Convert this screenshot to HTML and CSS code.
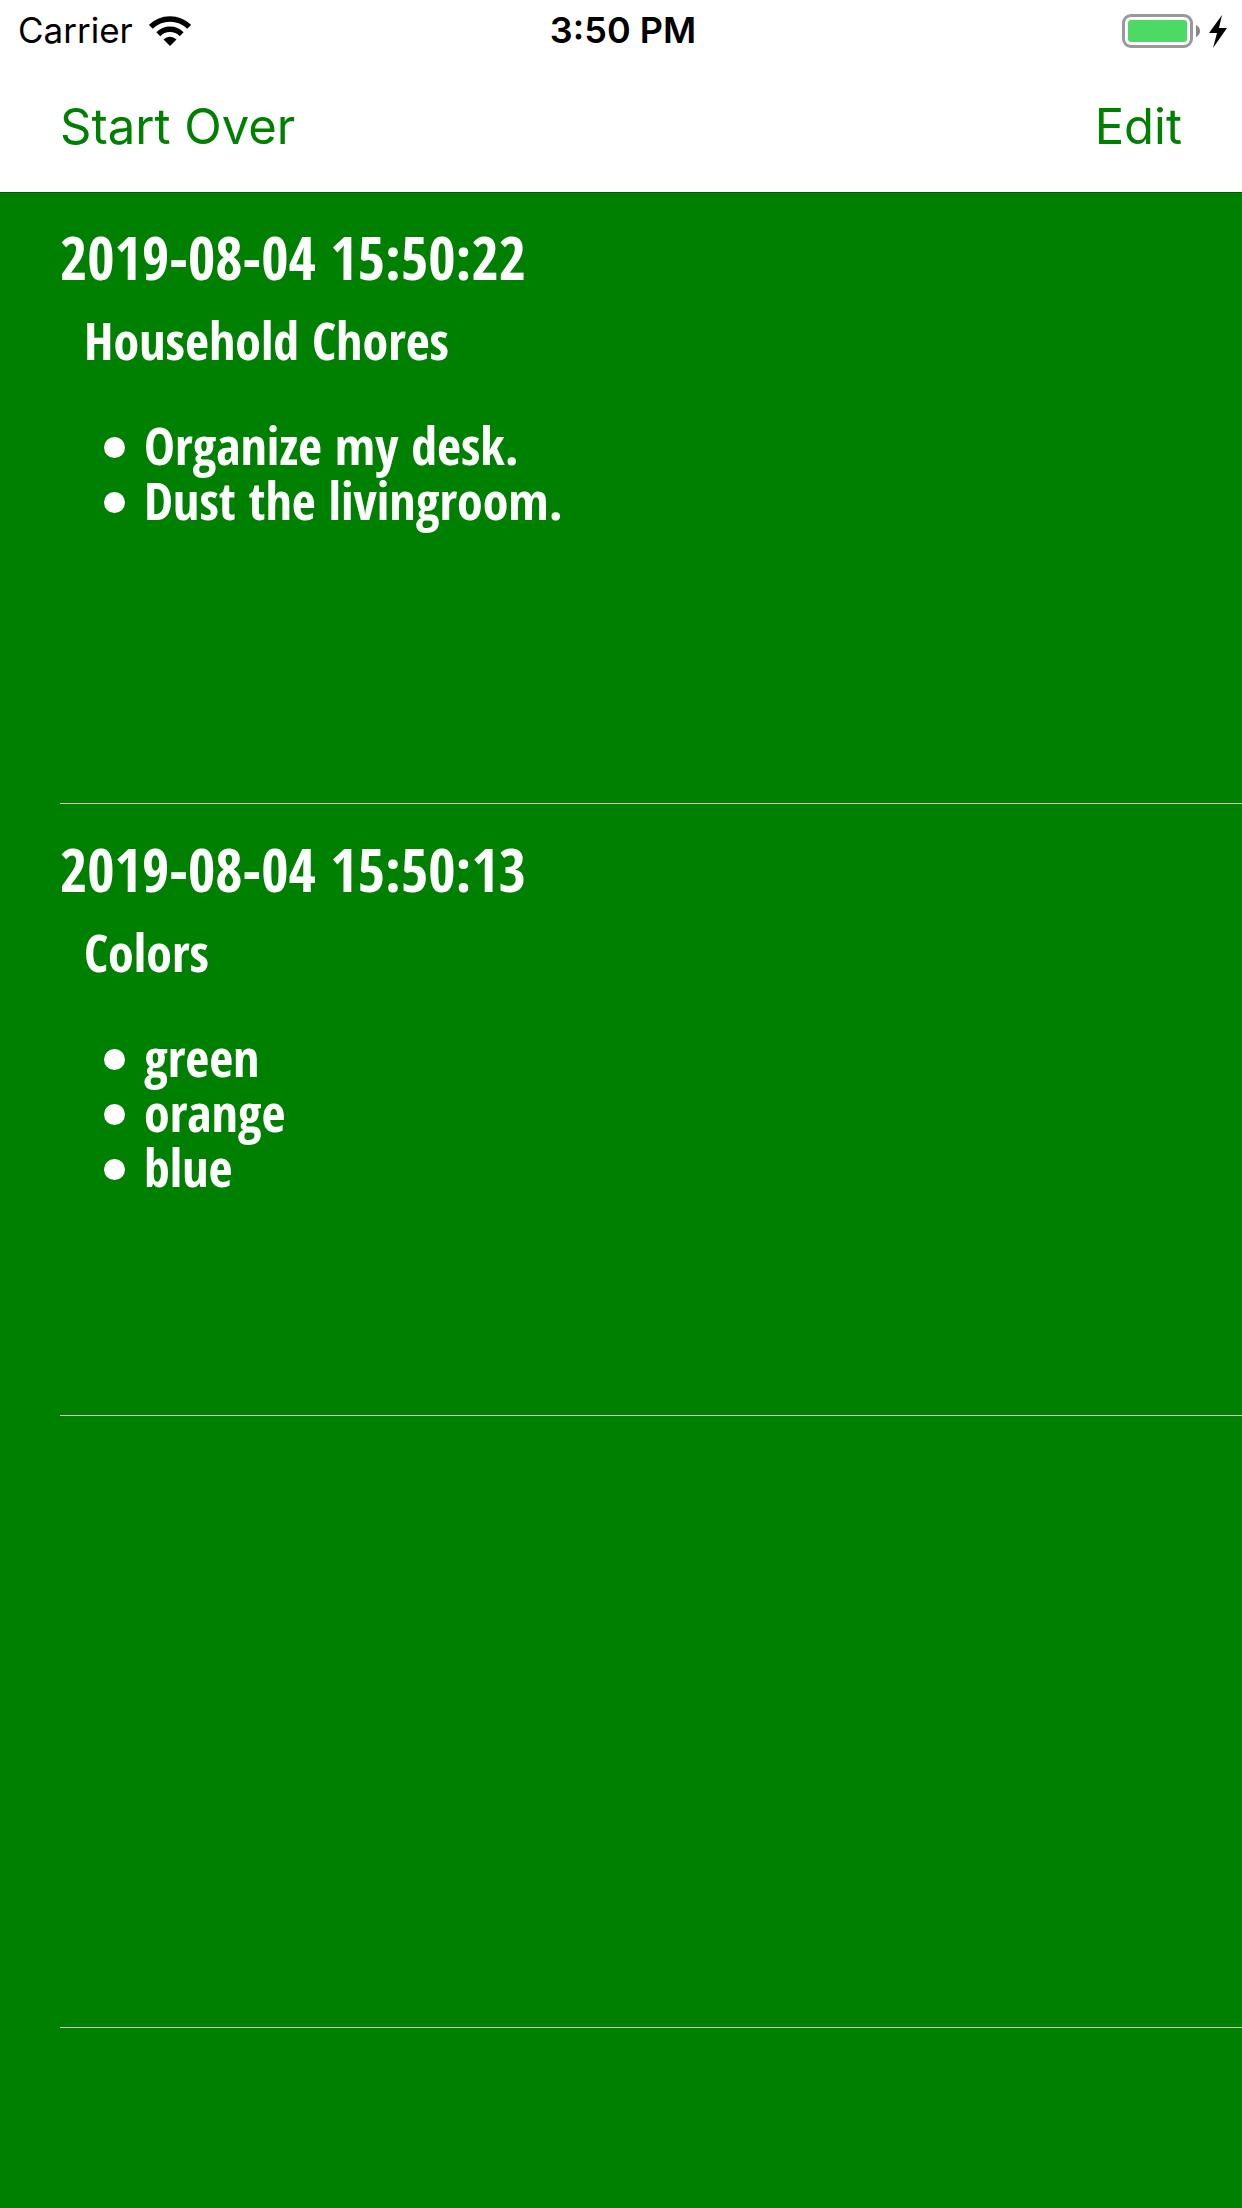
FILE: index.html
```html
<!DOCTYPE html>
<html lang="en">
<head>
  <meta charset="utf-8">
  <meta name="viewport" content="width=device-width, initial-scale=1">
  <title>Lists</title>
  <link rel="stylesheet" href="styles.css">
</head>
<body>
  <div class="status-bar">
    <div class="status-left">
      <span>Carrier</span>
      <svg class="wifi" viewBox="0 0 42 30" aria-hidden="true">
        <path d="M21 30 14.5 23.5A9.2 9.2 0 0 1 27.500 23.500Z"/>
        <path class="arc" d="M9.300 18.200A16.500 16.500 0 0 1 32.700 18.200M1.800 10.900A27.200 27.200 0 0 1 40.200 10.900"/>
      </svg>
    </div>
    <time class="status-time">3:50 PM</time>
    <div class="status-right">
      <svg class="battery" viewBox="0 0 106 34" aria-hidden="true">
        <rect class="shell" x="1.500" y="1.500" width="68" height="31" rx="7.500"/>
        <rect class="charge" x="6" y="6" width="59" height="22" rx="3"/>
        <path class="cap" d="M74 11Q78 13 78 17T74 23Z"/>
        <path d="M100 1 87 19H95L91 34 105 14H97Z"/>
      </svg>
    </div>
  </div>
  <header class="nav-bar">
    <button type="button" class="nav-button">Start Over</button>
    <button type="button" class="nav-button">Edit</button>
  </header>
  <main class="entries">
    <article class="entry">
      <h2 class="entry-date">2019-08-04 15:50:22</h2>
      <h3 class="entry-title">Household Chores</h3>
      <ul class="entry-items">
        <li>Organize my desk.</li>
        <li>Dust the livingroom.</li>
      </ul>
    </article>
    <article class="entry">
      <h2 class="entry-date">2019-08-04 15:50:13</h2>
      <h3 class="entry-title">Colors</h3>
      <ul class="entry-items">
        <li>green</li>
        <li>orange</li>
        <li>blue</li>
      </ul>
    </article>
    <div class="entry"></div>
  </main>
</body>
</html>
```
FILE: styles.css
```css
* {
  box-sizing: border-box;
}

body {
  margin: 0;
  min-height: 100vh;
  display: flex;
  flex-direction: column;
  background: #fff;
  color: #000;
  font-family: Inter, "Liberation Sans", sans-serif;
}

.status-bar {
  display: grid;
  grid-template-columns: 1fr auto 1fr;
  align-items: center;
  height: 61px;
  padding: 0 14px 0 18px;
  font-size: 35px;
  line-height: 61px;
}

.status-left {
  display: flex;
  align-items: center;
  gap: 16px;
}

.status-time {
  font-size: 36px;
  font-weight: 600;
}

.status-right {
  display: flex;
  justify-content: flex-end;
}

.wifi {
  width: 42px;
  height: 30px;
}

.arc {
  fill: none;
  stroke: #000;
  stroke-width: 5.5;
}

.battery {
  width: 106px;
  height: 34px;
}

.shell {
  fill: none;
  stroke: #999;
  stroke-width: 3;
}

.charge {
  fill: #4cd964;
}

.cap {
  fill: #888;
}

.nav-bar {
  display: flex;
  justify-content: space-between;
  align-items: center;
  height: 131px;
  padding: 0 60px;
}

.nav-button {
  border: 0;
  padding: 0;
  background: none;
  color: #008000;
  font: inherit;
  font-size: 49px;
  line-height: 60px;
}

.entries {
  flex: 1;
  background: #008000;
  box-shadow: inset 0 1px #005800;
  color: #fff;
  padding-left: 60px;
  font-family: "Marker Felt", "Open Sans Condensed", "Liberation Sans Narrow", "Noto Sans", sans-serif;
  font-weight: 700;
}

.entry {
  height: 612px;
  padding-top: 29px;
  border-bottom: 1px solid #c8c7cc;
}

.entry-date,
.entry-title {
  margin: 0;
  font-weight: 700;
}

.entry-date {
  font-size: 59px;
  line-height: 72px;
}

.entry-title {
  margin-top: 13px;
  padding-left: 24px;
  font-size: 52px;
  line-height: 68px;
}

.entry-items {
  margin: 43px 0 0;
  padding: 0;
  list-style: none;
  font-size: 52px;
  line-height: 55px;
}

.entry-items li {
  display: flex;
  align-items: center;
  gap: 19px;
  padding-left: 44px;
}

.entry-items li::before {
  content: "";
  width: 21px;
  height: 21px;
  margin-top: 6px;
  border-radius: 50%;
  background: #fff;
}
```
